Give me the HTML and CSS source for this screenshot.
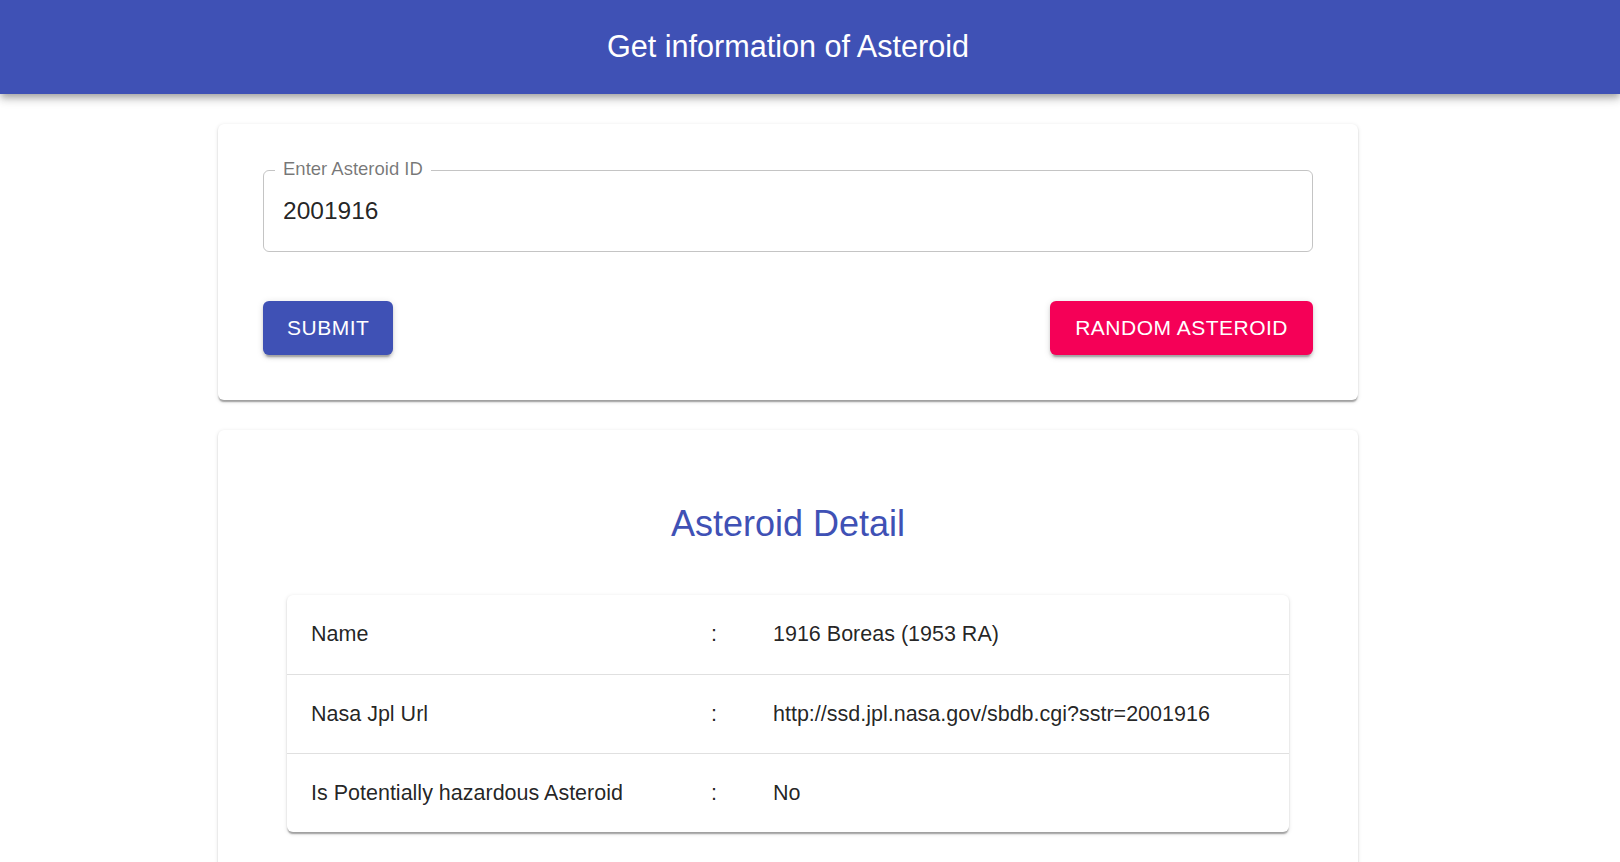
FILE: index.html
```html
<!DOCTYPE html>
<html lang="en">
<head>
<meta charset="utf-8">
<title>Get information of Asteroid</title>
<link rel="stylesheet" href="styles.css">
</head>
<body>
<header class="appbar">
  <h1 class="appbar-title">Get information of Asteroid</h1>
</header>
<main class="page">
  <section class="card search-card">
    <div class="field">
      <span class="field-label">Enter Asteroid ID</span>
      <input class="field-input" type="text" value="2001916">
    </div>
    <div class="actions">
      <button class="btn btn-primary">Submit</button>
      <button class="btn btn-secondary">Random Asteroid</button>
    </div>
  </section>
  <section class="card detail-card">
    <h2 class="detail-title">Asteroid Detail</h2>
    <div class="table-paper">
      <table class="detail-table">
        <colgroup>
          <col class="col-key">
          <col class="col-sep">
          <col>
        </colgroup>
        <tbody>
          <tr><td>Name</td><td>:</td><td>1916 Boreas (1953 RA)</td></tr>
          <tr><td>Nasa Jpl Url</td><td>:</td><td>http://ssd.jpl.nasa.gov/sbdb.cgi?sstr=2001916</td></tr>
          <tr><td>Is Potentially hazardous Asteroid</td><td>:</td><td>No</td></tr>
        </tbody>
      </table>
    </div>
  </section>
</main>
</body>
</html>
```

FILE: styles.css
```css
* { box-sizing: border-box; }
html, body { margin: 0; padding: 0; background: #ffffff; }
body {
  font-family: "Liberation Sans", Arial, sans-serif;
  color: rgba(0, 0, 0, 0.87);
}

.appbar {
  height: 94px;
  background: #3f51b5;
  display: flex;
  align-items: center;
  justify-content: center;
  padding-right: 44px;
  box-shadow: 0 3px 6px -1.5px rgba(0,0,0,0.2), 0 6px 7.5px 0 rgba(0,0,0,0.14), 0 1.5px 15px 0 rgba(0,0,0,0.12);
  position: relative;
  z-index: 1;
}
.appbar-title {
  margin: 0 0 2px 0;
  color: #ffffff;
  font-size: 30.6px;
  font-weight: 400;
  line-height: 1.2;
}

.page {
  padding: 30px 44px 0 0;
  display: flex;
  flex-direction: column;
  align-items: center;
  gap: 30px;
}

.card {
  width: 1140px;
  background: #ffffff;
  border-radius: 6px;
  box-shadow: 0 3px 1.5px -1.5px rgba(0,0,0,0.2), 0 1.5px 1.5px 0 rgba(0,0,0,0.14), 0 1.5px 4.5px 0 rgba(0,0,0,0.12);
}

.search-card {
  padding: 46px 45px 45px;
}

.field {
  height: 82px;
  border: 1px solid rgba(0, 0, 0, 0.23);
  border-radius: 6px;
  padding: 0 19px;
  display: flex;
  flex-direction: column;
  align-items: flex-start;
}
.field-label {
  margin: -11px 0 0 -8px;
  padding: 0 8px;
  background: #ffffff;
  font-size: 18.5px;
  line-height: 18px;
  color: rgba(0, 0, 0, 0.54);
}
.field-input {
  margin-top: 19px;
  width: 100%;
  height: 28px;
  border: none;
  outline: none;
  padding: 0;
  font-family: inherit;
  font-size: 24.5px;
  line-height: 28px;
  color: rgba(0, 0, 0, 0.87);
  background: transparent;
}

.actions {
  margin-top: 49px;
  display: flex;
  justify-content: space-between;
}
.btn {
  height: 54px;
  padding: 0 24px;
  border: none;
  border-radius: 6px;
  font-family: inherit;
  font-size: 21px;
  font-weight: 400;
  letter-spacing: 0.5px;
  text-transform: uppercase;
  color: #ffffff;
  cursor: pointer;
  box-shadow: 0 4.5px 1.5px -3px rgba(0,0,0,0.2), 0 3px 3px 0 rgba(0,0,0,0.14), 0 1.5px 7.5px 0 rgba(0,0,0,0.12);
}
.btn-primary { background: #3f51b5; }
.btn-secondary { background: #f50057; padding: 0 25px; }

.detail-card {
  padding: 72px 69px 45px;
}
.detail-title {
  margin: 0 0 49px;
  text-align: center;
  font-size: 36px;
  font-weight: 400;
  line-height: 1.235;
  color: #3f51b5;
}

.table-paper {
  border-radius: 6px;
  background: #ffffff;
  box-shadow: 0 3px 1.5px -1.5px rgba(0,0,0,0.2), 0 1.5px 1.5px 0 rgba(0,0,0,0.14), 0 1.5px 4.5px 0 rgba(0,0,0,0.12);
  overflow: hidden;
}
.detail-table {
  width: 100%;
  border-collapse: collapse;
  table-layout: fixed;
}
.col-key { width: 400px; }
.col-sep { width: 62px; }
.detail-table td {
  height: 79px;
  padding: 0 24px;
  font-size: 21.5px;
  line-height: 1.43;
  color: rgba(0, 0, 0, 0.87);
  border-bottom: 1px solid #e0e0e0;
  vertical-align: middle;
  white-space: nowrap;
}
.detail-table tr:last-child td { border-bottom: none; }
```
